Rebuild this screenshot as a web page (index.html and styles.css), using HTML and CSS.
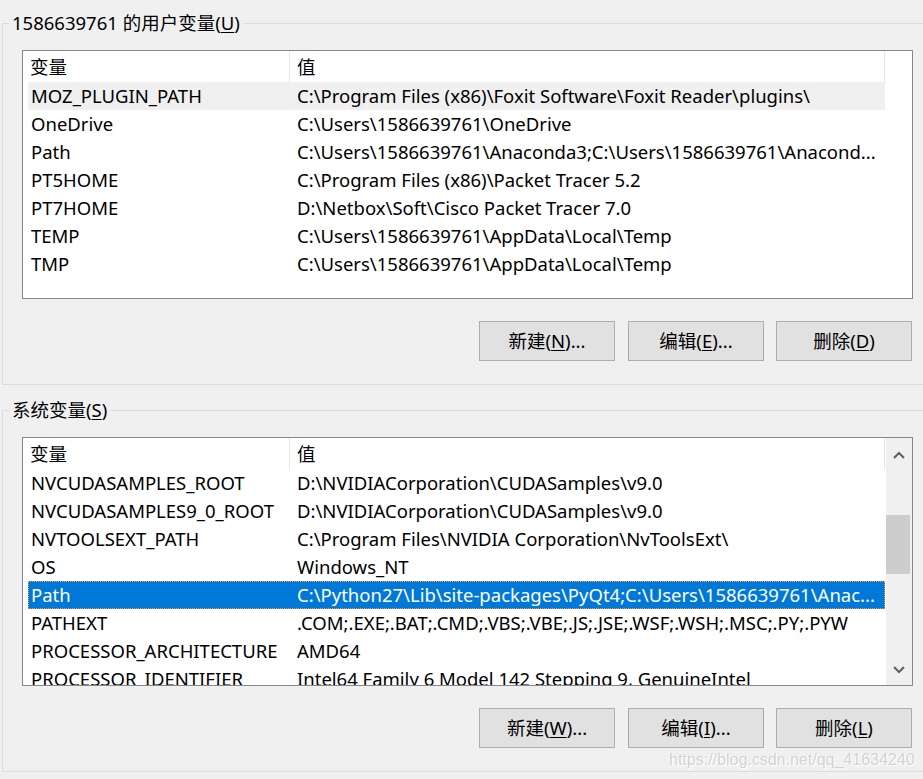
FILE: index.html
```html
<!DOCTYPE html>
<html lang="zh-CN">
<head>
<meta charset="utf-8">
<title>环境变量</title>
<link rel="stylesheet" href="styles.css">
</head>
<body>
<div class="window">
  <section class="group">
    <div class="group-title">1586639761 的用户变量(<u>U</u>)</div>
    <div class="list">
      <div class="list-main">
        <div class="list-header">
          <div class="hcell hc1">变量</div>
          <div class="hcell hc2">值</div>
        </div>
        <div class="rows">
          <div class="row row-hover"><span class="c1">MOZ_PLUGIN_PATH</span><span class="c2">C:\Program Files (x86)\Foxit Software\Foxit Reader\plugins\</span></div>
          <div class="row"><span class="c1">OneDrive</span><span class="c2">C:\Users\1586639761\OneDrive</span></div>
          <div class="row"><span class="c1">Path</span><span class="c2">C:\Users\1586639761\Anaconda3;C:\Users\1586639761\Anacond...</span></div>
          <div class="row"><span class="c1">PT5HOME</span><span class="c2">C:\Program Files (x86)\Packet Tracer 5.2</span></div>
          <div class="row"><span class="c1">PT7HOME</span><span class="c2">D:\Netbox\Soft\Cisco Packet Tracer 7.0</span></div>
          <div class="row"><span class="c1">TEMP</span><span class="c2">C:\Users\1586639761\AppData\Local\Temp</span></div>
          <div class="row"><span class="c1">TMP</span><span class="c2">C:\Users\1586639761\AppData\Local\Temp</span></div>
        </div>
      </div>
      <div class="list-side"></div>
    </div>
    <div class="buttons">
      <button class="btn btn-first">新建(<u>N</u>)...</button>
      <button class="btn btn-mid">编辑(<u>E</u>)...</button>
      <button class="btn">删除(<u>D</u>)</button>
    </div>
  </section>

  <section class="group group-system">
    <div class="group-title">系统变量(<u>S</u>)</div>
    <div class="list">
      <div class="list-main">
        <div class="list-header">
          <div class="hcell hc1">变量</div>
          <div class="hcell hc2">值</div>
        </div>
        <div class="rows">
          <div class="row"><span class="c1">NVCUDASAMPLES_ROOT</span><span class="c2">D:\NVIDIACorporation\CUDASamples\v9.0</span></div>
          <div class="row"><span class="c1">NVCUDASAMPLES9_0_ROOT</span><span class="c2">D:\NVIDIACorporation\CUDASamples\v9.0</span></div>
          <div class="row"><span class="c1">NVTOOLSEXT_PATH</span><span class="c2">C:\Program Files\NVIDIA Corporation\NvToolsExt\</span></div>
          <div class="row"><span class="c1">OS</span><span class="c2">Windows_NT</span></div>
          <div class="row row-selected"><span class="c1">Path</span><span class="c2">C:\Python27\Lib\site-packages\PyQt4;C:\Users\1586639761\Anac...</span></div>
          <div class="row"><span class="c1">PATHEXT</span><span class="c2">.COM;.EXE;.BAT;.CMD;.VBS;.VBE;.JS;.JSE;.WSF;.WSH;.MSC;.PY;.PYW</span></div>
          <div class="row"><span class="c1">PROCESSOR_ARCHITECTURE</span><span class="c2">AMD64</span></div>
          <div class="row"><span class="c1">PROCESSOR_IDENTIFIER</span><span class="c2">Intel64 Family 6 Model 142 Stepping 9, GenuineIntel</span></div>
        </div>
      </div>
      <div class="list-side scrollbar">
        <div class="sb-arrow sb-up">
          <svg width="12" height="8" viewBox="0 0 12 8"><polyline points="1,7 6,2 11,7" fill="none" stroke="#606060" stroke-width="2"/></svg>
        </div>
        <div class="sb-track"><div class="sb-thumb"></div></div>
        <div class="sb-arrow sb-down">
          <svg width="12" height="8" viewBox="0 0 12 8"><polyline points="1,1 6,6 11,1" fill="none" stroke="#606060" stroke-width="2"/></svg>
        </div>
      </div>
    </div>
    <div class="buttons">
      <button class="btn btn-first">新建(<u>W</u>)...</button>
      <button class="btn btn-mid">编辑(<u>I</u>)...</button>
      <button class="btn">删除(<u>L</u>)</button>
    </div>
  </section>

  <div class="watermark">https://blog.csdn.net/qq_41634240</div>
</div>
</body>
</html>
```

FILE: styles.css
```css
* { box-sizing: border-box; }

html, body {
  margin: 0;
  padding: 0;
  background: #f0f0f0;
}

body {
  width: 923px;
  height: 779px;
  overflow: hidden;
  font-family: "Noto Sans", "Noto Sans CJK SC", sans-serif;
  font-size: 18.5px;
  color: #000;
}

.window {
  position: relative;
  width: 923px;
  height: 779px;
  padding-top: 23px;
  overflow: hidden;
}

.group {
  margin-left: 2px;
  width: 960px;
  border: 1px solid #dcdcdc;
  padding-bottom: 23px;
}

.group-system {
  margin-top: 25px;
}

.group-title {
  width: fit-content;
  height: 24px;
  margin: -13px 0 0 6px;
  padding: 0 3px;
  line-height: 24px;
  background: #f0f0f0;
  white-space: nowrap;
}

u {
  text-decoration: underline;
  text-underline-offset: 2px;
  text-decoration-thickness: 1px;
}

/* list view */
.list {
  display: flex;
  margin: 15px 0 0 19px;
  width: 891px;
  height: 249px;
  border: 1px solid #828790;
  background: #fff;
  overflow: hidden;
}

.list-main {
  width: 863px;
  display: flex;
  flex-direction: column;
  overflow: hidden;
}

.list-side {
  width: 26px;
  flex: none;
}

.list-header {
  display: flex;
  height: 31px;
  flex: none;
}

.hcell {
  height: 31px;
  line-height: 30px;
  padding-top: 1px;
  white-space: nowrap;
}

.hc1 {
  width: 267px;
  padding-left: 7px;
  border-right: 1px solid #e5e5e5;
}

.hc2 {
  width: 595px;
  padding-left: 7px;
  border-right: 1px solid #e5e5e5;
}

.rows {
  overflow: hidden;
  flex: 1;
}

.row {
  display: flex;
  margin-left: 5px;
  width: 857px;
  height: 28px;
  line-height: 28px;
  white-space: nowrap;
}

.row .c1 {
  width: 261px;
  padding-left: 3px;
  flex: none;
  overflow: hidden;
}

.row .c2 {
  flex: 1;
  padding-left: 8px;
  overflow: hidden;
}

.row-hover {
  background: #f0f0f0;
}

.row-selected {
  background: #0078d7;
  color: #fff;
  outline: 1px dotted #f39a3c;
  outline-offset: -1px;
}

/* scrollbar */
.scrollbar {
  display: flex;
  flex-direction: column;
  background: #f0f0f0;
}

.sb-arrow {
  display: flex;
  align-items: center;
  justify-content: center;
  padding-right: 1px;
}

.sb-up { height: 33px; }
.sb-down { height: 31px; }

.sb-track {
  flex: 1;
}

.sb-thumb {
  margin-top: 44px;
  width: 24px;
  height: 59px;
  background: #cdcdcd;
}

/* buttons */
.buttons {
  display: flex;
  justify-content: flex-end;
  margin: 22px 0 0 19px;
  width: 890px;
}

.btn {
  width: 136px;
  height: 40px;
  margin: 0;
  padding: 0;
  border: 1px solid #adadad;
  background: #e1e1e1;
  font-family: "Noto Sans", "Noto Sans CJK SC", sans-serif;
  font-size: 18.5px;
  color: #000;
  line-height: 36px;
}

.btn-first { margin-right: 13px; }
.btn-mid { margin-right: 12px; }

.watermark {
  position: absolute;
  left: 669px;
  top: 752px;
  font-family: "Liberation Sans", Arial, sans-serif;
  font-size: 16px;
  line-height: 16px;
  color: #d2d2d2;
  text-shadow: 1px 1px 0 #fff, -1px 0 0 #fafafa;
  white-space: nowrap;
}
```
